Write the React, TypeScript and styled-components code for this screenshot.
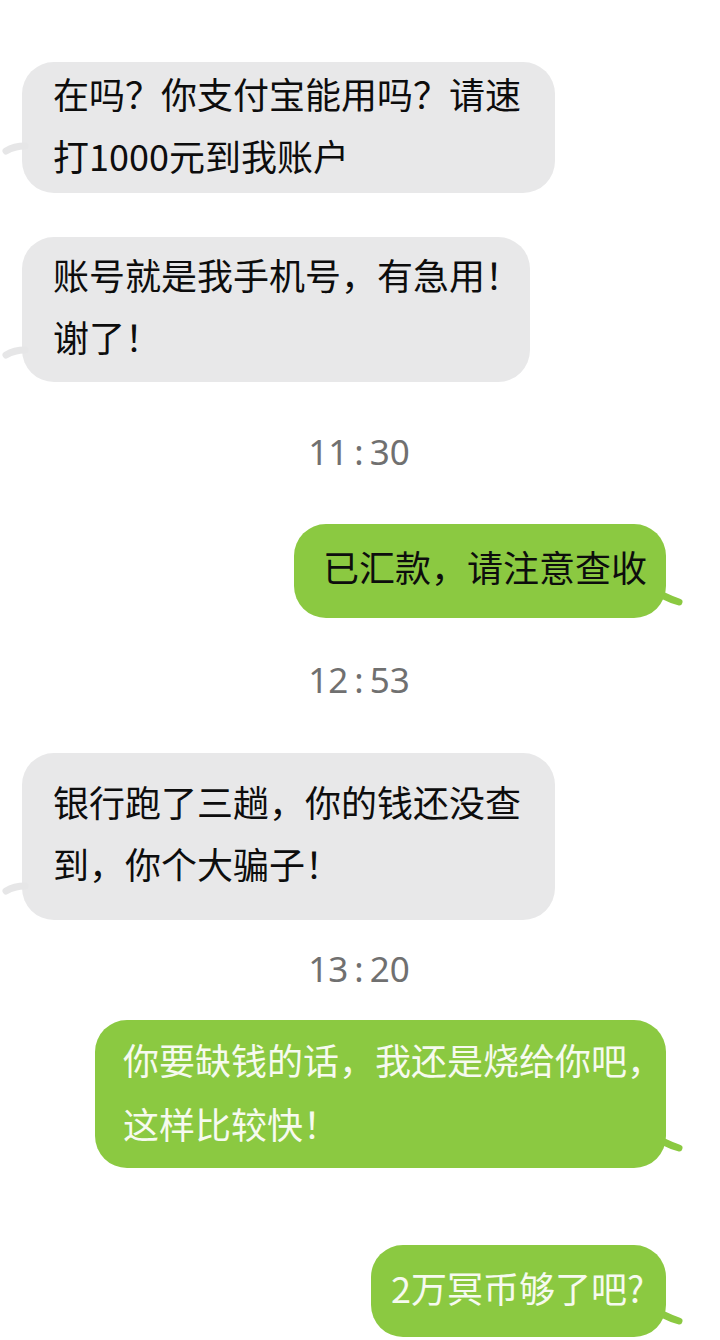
import React from "react";
import styled, { createGlobalStyle } from "styled-components";

const Global = createGlobalStyle`
  html, body { margin: 0; padding: 0; background: #ffffff; }
  body { font-family: "Noto Sans CJK SC", "Noto Sans", sans-serif; }
`;

const Page = styled.div`
  width: 720px;
  min-height: 1340px;
  box-sizing: border-box;
  padding: 62px 54px 0 22px;
  display: flex;
  flex-direction: column;
  overflow: hidden;
`;

const Row = styled.div<{ $side: "left" | "right"; $mt: number }>`
  display: flex;
  justify-content: ${(p) => (p.$side === "left" ? "flex-start" : "flex-end")};
  margin-top: ${(p) => p.$mt}px;
`;

const Bubble = styled.div<{
  $kind: "gray" | "green";
  $w: number;
  $pt: number;
  $pb: number;
  $pl: number;
  $lh: number;
  $light?: boolean;
}>`
  position: relative;
  box-sizing: border-box;
  width: ${(p) => p.$w}px;
  padding: ${(p) => `${p.$pt}px 0 ${p.$pb}px ${p.$pl}px`};
  border-radius: 32px;
  background: ${(p) => (p.$kind === "gray" ? "#e8e8e9" : "#8bc941")};
  color: ${(p) => (p.$light ? "#f6faef" : "#0d0d0d")};
  font-family: "Noto Sans CJK SC", "Noto Sans", sans-serif;
  font-size: 36px;
  line-height: ${(p) => p.$lh}px;
  white-space: nowrap;
`;

const TailSvg = styled.svg<{ $side: "left" | "right"; $b: number }>`
  position: absolute;
  bottom: ${(p) => p.$b}px;
  ${(p) => (p.$side === "left" ? "left: -20px;" : "right: -18px;")}
  overflow: visible;
`;

const Time = styled.div<{ $mt: number }>`
  margin-top: ${(p) => p.$mt}px;
  text-align: center;
  padding-left: 30px;
  font-family: "Noto Sans", "Open Sans", sans-serif;
  font-size: 35px;
  line-height: 48px;
  color: #707070;
`;

const Colon = styled.span`
  margin: 0 6px;
`;

function Tail({ side, b, color }: { side: "left" | "right"; b: number; color: string }) {
  if (side === "left") {
    return (
      <TailSvg $side="left" $b={b} width="24" height="14" viewBox="0 0 24 14">
        <path d="M23 5 C 15 5, 9 7, 4 10" stroke={color} strokeWidth="7" strokeLinecap="round" fill="none" />
      </TailSvg>
    );
  }
  return (
    <TailSvg $side="right" $b={b} width="22" height="14" viewBox="0 0 22 14">
      <path d="M2 3 Q 10 7 17 9" stroke={color} strokeWidth="7" strokeLinecap="round" fill="none" />
    </TailSvg>
  );
}

function Stamp({ mt, h, m }: { mt: number; h: string; m: string }) {
  return (
    <Time $mt={mt}>
      {h}
      <Colon>:</Colon>
      {m}
    </Time>
  );
}

const GRAY = "#e6e6e7";
const GREEN = "#8bc941";

export default function App() {
  return (
    <>
      <Global />
      <Page>
        <Row $side="left" $mt={0}>
          <Bubble $kind="gray" $w={533} $pt={0} $pb={7} $pl={31} $lh={62}>
            在吗？你支付宝能用吗？请速
            <br />
            打1000元到我账户
            <Tail side="left" b={38} color={GRAY} />
          </Bubble>
        </Row>

        <Row $side="left" $mt={44}>
          <Bubble $kind="gray" $w={508} $pt={6} $pb={15} $pl={31} $lh={62}>
            账号就是我手机号，有急用！
            <br />
            谢了！
            <Tail side="left" b={23} color={GRAY} />
          </Bubble>
        </Row>

        <Stamp mt={46} h="11" m="30" />

        <Row $side="right" $mt={48}>
          <Bubble $kind="green" $w={372} $pt={11} $pb={21} $pl={29} $lh={62}>
            已汇款，请注意查收
            <Tail side="right" b={11} color={GREEN} />
          </Bubble>
        </Row>

        <Stamp mt={38} h="12" m="53" />

        <Row $side="left" $mt={49}>
          <Bubble $kind="gray" $w={533} $pt={17} $pb={26} $pl={31} $lh={62}>
            银行跑了三趟，你的钱还没查
            <br />
            到，你个大骗子！
            <Tail side="left" b={25} color={GRAY} />
          </Bubble>
        </Row>

        <Stamp mt={25} h="13" m="20" />

        <Row $side="right" $mt={27}>
          <Bubble $kind="green" $w={571} $pt={7} $pb={13} $pl={28} $lh={64} $light>
            你要缺钱的话，我还是烧给你吧，
            <br />
            这样比较快！
            <Tail side="right" b={15} color={GREEN} />
          </Bubble>
        </Row>

        <Row $side="right" $mt={77}>
          <Bubble $kind="green" $w={295} $pt={11} $pb={19} $pl={20} $lh={62} $light>
            2万冥币够了吧?
            <Tail side="right" b={11} color={GREEN} />
          </Bubble>
        </Row>
      </Page>
    </>
  );
}
